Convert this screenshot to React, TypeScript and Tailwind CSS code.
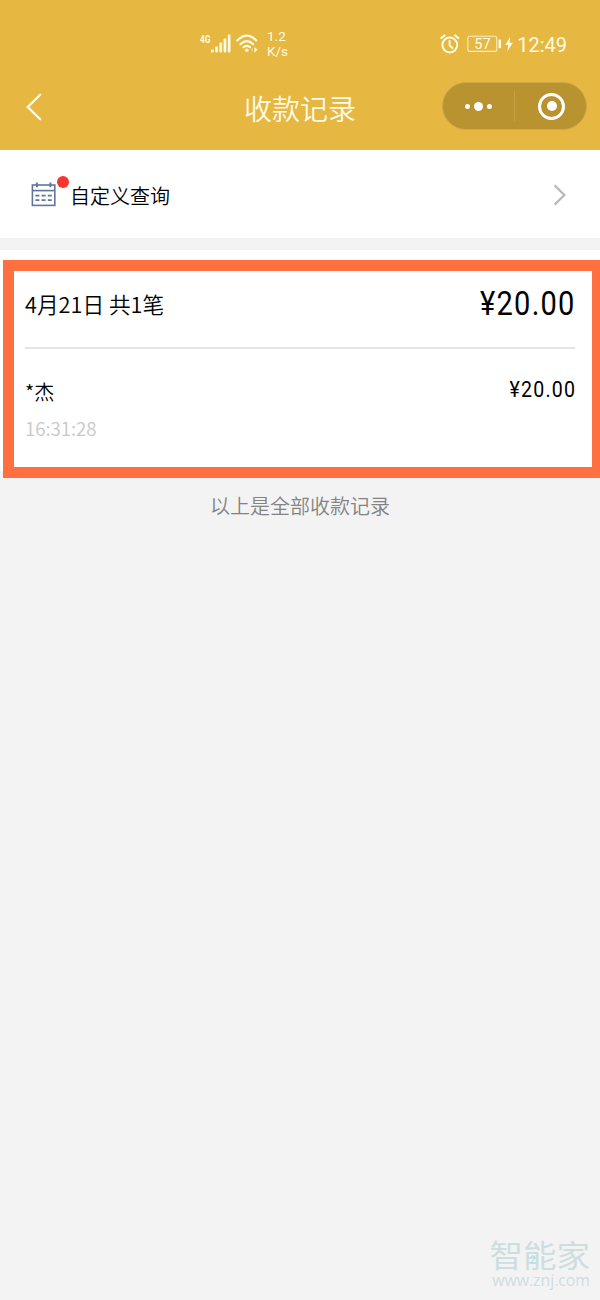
const SignalIcon = () => (
  <svg width="20" height="19" viewBox="0 0 20 19" fill="#fffbe0">
    <rect x="0" y="15.5" width="2.7" height="3" rx="1" />
    <rect x="4.2" y="12.5" width="2.7" height="6" rx="1" />
    <rect x="8.4" y="8.5" width="2.7" height="10" rx="1" />
    <rect x="12.6" y="4.5" width="2.7" height="14" rx="1" />
    <rect x="16.8" y="0.5" width="2.7" height="18" rx="1" />
  </svg>
);

const WifiIcon = () => (
  <svg width="23" height="19" viewBox="0 0 23 19" fill="none" stroke="#fffbe0" strokeWidth="2.2" strokeLinecap="round">
    <path d="M1.3 6.5 Q10.8 -3.3 20.3 6.5" />
    <path d="M4.4 10.2 Q10.8 4 17.2 10.2" />
    <path d="M7.6 13.2 Q10.8 10.4 14 13.2" />
    <circle cx="10.8" cy="16.2" r="1.8" fill="#fffbe0" stroke="none" />
    <path d="M16.8 13.8v4l-2-2z" fill="#fffbe0" fillOpacity="0.45" stroke="none" />
    <path d="M18.4 13.1v5.4l3.2-2.7z" fill="#fffbe0" stroke="none" />
  </svg>
);

const AlarmIcon = () => (
  <svg width="20" height="20" viewBox="0 0 20 20" fill="none" stroke="#fffbe0" strokeWidth="2" strokeLinecap="round">
    <circle cx="9.8" cy="11" r="7.4" />
    <path d="M1.2 4.1 4.6 1.4M15 1.4l3.4 2.7M9.6 6.8v4.6l2.8 2.6" />
  </svg>
);

const BatteryIcon = () => (
  <svg width="35" height="18" viewBox="0 0 35 18" fill="none">
    <rect x="0.8" y="1.2" width="29" height="15.2" rx="2" stroke="#fffbe0" strokeOpacity="0.8" strokeWidth="1.1" />
    <rect x="31.6" y="4.6" width="2.4" height="8.6" rx="0.6" fill="#fffbe0" />
    <text x="15.4" y="13.8" textAnchor="middle" fontFamily="Roboto, sans-serif" fontSize="14.5" fill="#fffbe0">57</text>
  </svg>
);

const CalendarIcon = () => (
  <svg width="26" height="26" viewBox="0 0 26 26" fill="none" stroke="#62739e" strokeWidth="1.6">
    <rect x="1.4" y="4" width="22.4" height="20.4" />
    <path d="M1.4 9.6h22.4" />
    <path d="M5.9 1.6v4.6M19.4 1.6v4.6" strokeWidth="1.9" />
    <path d="M4.4 14.6h4M10.6 14.6h4M16.8 14.6h4M4.4 19.2h4M10.6 19.2h4M16.8 19.2h4" strokeWidth="1.7" />
  </svg>
);

const StatusBar = () => (
  <div className="flex h-[74px] items-start pr-[33px] pl-[200px] text-[#fffbe0]">
    <span className="mt-[34px] w-[11px] font-[Roboto,sans-serif] text-[10.5px] leading-3 font-bold">
      <span className="inline-block origin-left scale-x-[0.8]">4G</span>
    </span>
    <div className="mt-[34px] flex">
      <SignalIcon />
      <span className="ml-[5px]">
        <WifiIcon />
      </span>
    </div>
    <div className="mt-[29px] ml-[8px] font-[Roboto,sans-serif] text-[13.5px] leading-[15px]">
      <div>1.2</div>
      <div>K/s</div>
    </div>
    <div className="mt-[34px] ml-auto flex h-5 items-center">
      <AlarmIcon />
      <span className="ml-[7px]">
        <BatteryIcon />
      </span>
      <svg className="ml-[3px]" width="8" height="16" viewBox="0 0 8 16" fill="#fffbe0">
        <path d="M5.2 0.8 0.3 9h3l-.9 6L7.9 6.8H4.4z" />
      </svg>
      <span className="mt-[2px] ml-[4px] font-[Roboto,sans-serif] text-[20px] leading-5">12:49</span>
    </div>
  </div>
);

const NavBar = () => (
  <div className="grid h-[76px] grid-cols-3 items-start">
    <svg className="mt-[19px] ml-[25px]" width="19" height="28" viewBox="0 0 19 28" fill="none" stroke="#fffdf0" strokeWidth="2.3" strokeLinecap="round">
      <path d="M15.2 1.8 2.8 14l12.4 12.3" />
    </svg>
    <h1 className="mt-[14px] text-center text-[28px] leading-10 font-[350] text-[#fffbe6]">收款记录</h1>
    {/* capsule buttons */}
    <div className="mt-[8px] mr-[13px] flex h-12 w-[145px] items-center justify-self-end rounded-full border border-[#cea84b] bg-[#b9932f]">
      <div className="flex w-[71px] items-center justify-center gap-1">
        <i className="size-[5px] rounded-full bg-white" />
        <i className="size-[9px] rounded-full bg-white" />
        <i className="size-[5px] rounded-full bg-white" />
      </div>
      <i className="h-[30px] w-px bg-[#c9a144]" />
      <div className="flex flex-1 justify-center pl-[2px]">
        <div className="flex size-[27px] items-center justify-center rounded-full border-[3.5px] border-white">
          <i className="size-[10px] rounded-full bg-white" />
        </div>
      </div>
    </div>
  </div>
);

export default function App() {
  return (
    <div className="flex h-[1300px] w-[600px] flex-col overflow-hidden bg-[#f3f3f3] font-['Noto_Sans_CJK_SC',sans-serif] text-black">
      <header className="h-[150px] bg-[#e6b741]">
        <StatusBar />
        <NavBar />
      </header>

      <div className="flex h-[88px] items-center bg-white pr-[33px] pl-[31px]">
        <div className="relative">
          <CalendarIcon />
          <i className="absolute -top-[5px] left-[26px] size-3 rounded-full bg-[#f43530]" />
        </div>
        <span className="mt-[3px] ml-[13px] text-[20px] leading-7 font-[350]">自定义查询</span>
        <svg className="mt-px ml-auto" width="14" height="22" viewBox="0 0 14 22" fill="none" stroke="#b8b8b8" strokeWidth="2.2">
          <path d="M1.6 1.4 11.4 11l-9.8 9.6" />
        </svg>
      </div>

      <section className="mt-3 h-[221px] bg-white pt-[10px] pl-[3px]">
        <div className="h-[218px] w-[600px] border-[11px] border-[#ff6f3f] bg-white pl-[11px]">
          <div className="flex h-[78px] w-[550px] items-start justify-between border-b-2 border-[#e5e5e5]">
            <span className="mt-[17px] text-[21.7px] leading-8 font-[350]">4月21日 共1笔</span>
            <span className="mt-[13px] -mr-px origin-right scale-x-[0.88] font-[Roboto,sans-serif] text-[33px] leading-10 tracking-[1.4px]">¥20.00</span>
          </div>
          <div className="flex w-[550px] items-start justify-between">
            <div>
              <div className="mt-[29px] text-[20px] leading-7 font-[350]">*杰</div>
              <div className="mt-[8px] text-[18.7px] leading-7 font-[350] text-[#c8c8c8]">16:31:28</div>
            </div>
            <span className="mt-[27px] -mr-px origin-right scale-x-[0.91] font-[Roboto,sans-serif] text-[21.5px] leading-7 tracking-[1.3px]">¥20.00</span>
          </div>
        </div>
      </section>

      <p className="mt-[21px] text-center text-[20px] leading-7 font-[350] text-[#838383]">以上是全部收款记录</p>

      <footer className="relative mt-auto mr-[10px] mb-[11px] flex flex-col items-end self-end text-[#cddedf]">
        <div className="scale-y-[0.92] text-[33.5px] leading-[34px]">智能家</div>
        <div className="font-['Open_Sans',sans-serif] text-[15.8px] leading-[18px]">www.znj.com</div>
        {/* small mark inside the logo */}
        <svg className="absolute top-[18px] left-[40px]" width="6" height="9" viewBox="0 0 6 9" fill="none" stroke="#a5e3e2" strokeWidth="1.1">
          <path d="M1 2.4C1.4.3 4.8.3 4.8 2.8 4.8 4.5 2.4 6 1 8h4.2" />
        </svg>
      </footer>
    </div>
  );
}
